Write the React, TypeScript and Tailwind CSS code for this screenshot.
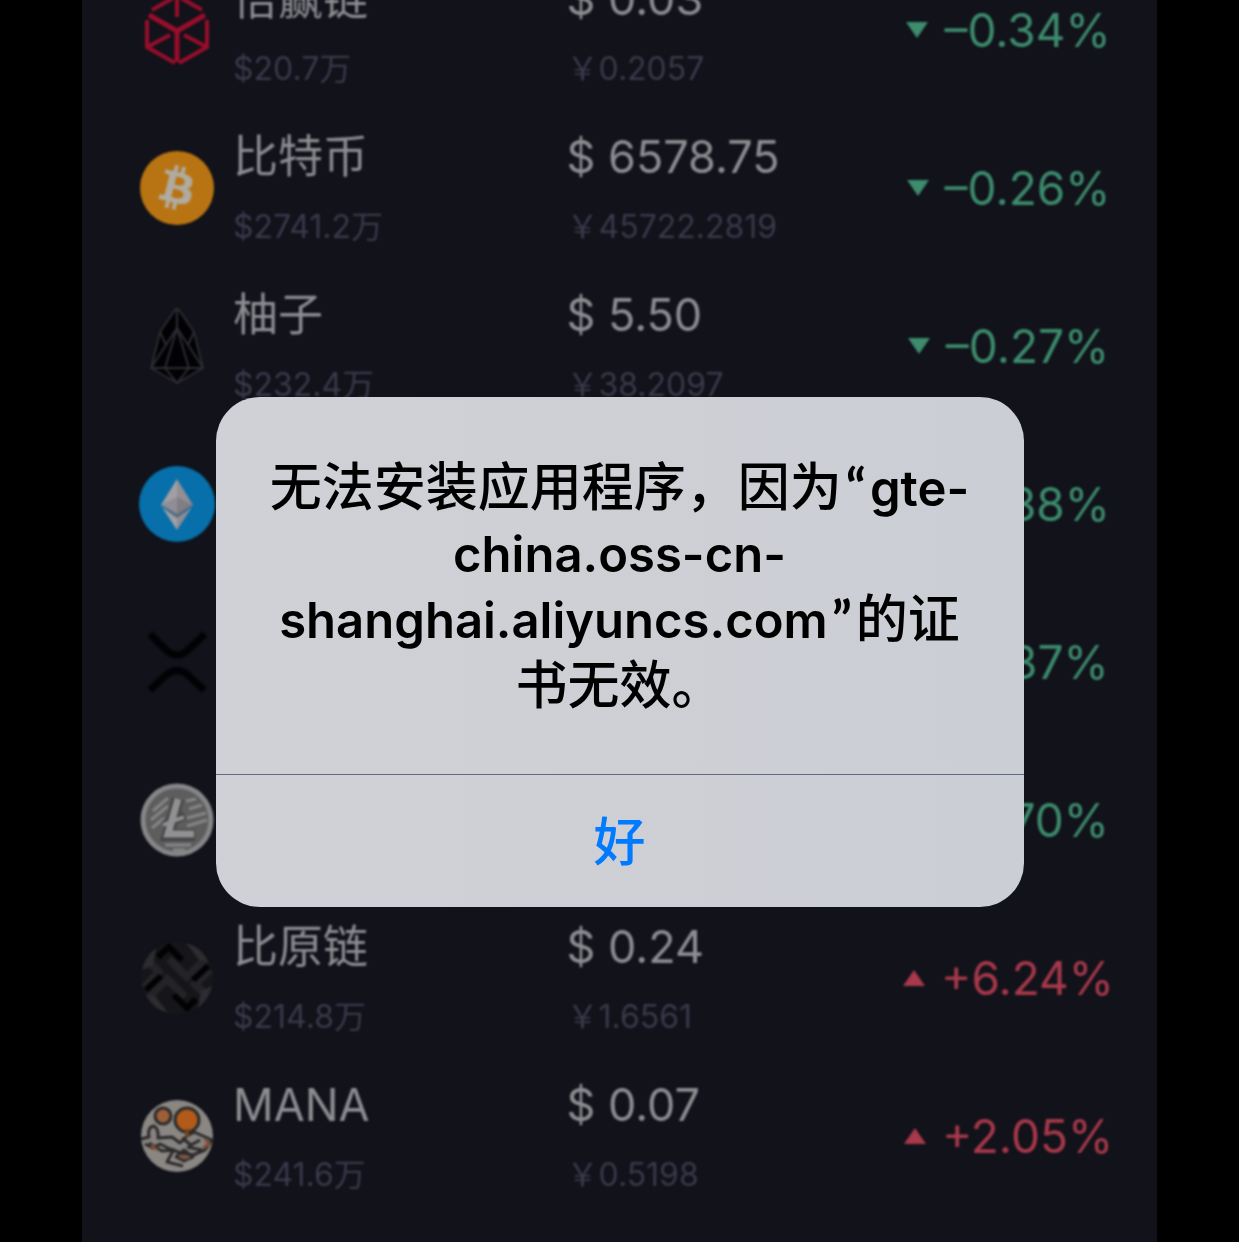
import type { ReactNode } from "react";
import { FaBitcoin } from "react-icons/fa";

type Coin = {
  id: string;
  logo: ReactNode;
  name?: string;
  volume?: string;
  usd?: string;
  cny?: string;
  change: string;
  rising?: boolean;
};

const CubeLogo = () => (
  <svg viewBox="0 0 76 76" className="size-full" fill="none" stroke="#980e2b" strokeWidth="5">
    <path d="M38 4 V25 M13 18 L34 6 M42 6 L63 18" strokeWidth="4" />
    <path d="M10 23 L38 39 L66 23 M38 38 V70" />
    <path d="M8 28 V55 L36 71 M68 28 V55 L40 71" strokeWidth="4" />
    <path d="M10 54 L31 43 M66 54 L45 43" strokeWidth="4" />
  </svg>
);

const BitcoinLogo = () => (
  <span className="m-px flex size-[74px] items-center justify-center rounded-full bg-[radial-gradient(circle,#b0aaa0_0_50%,#b87412_60%)]">
    <FaBitcoin className="size-[74px] text-[#b87412]" />
  </span>
);

const EosLogo = () => (
  <svg viewBox="0 0 76 76" className="size-full" fill="#020204" stroke="#2c2c33" strokeWidth="2" strokeLinejoin="round">
    <path d="M38 -1 L21 24 L12 60 L38 75 L64 60 L55 24 Z" />
    <path d="M38 20 L12 60 H64 Z" />
    <path d="M38 20 L26 60 L38 75 L50 60 Z M38 -1 V20 M21 24 L27 37 M55 24 L49 37" fill="none" />
  </svg>
);

const EthereumLogo = () => (
  <svg viewBox="0 0 76 76" className="size-full">
    <circle cx="38" cy="38" r="38" fill="#076fa9" />
    <path d="M38 13 L22 39 L38 48 Z" fill="#a19fa5" />
    <path d="M38 13 L54 39 L38 48 Z" fill="#928f95" />
    <path d="M22 39 L38 31 V48 Z" fill="#908e94" />
    <path d="M54 39 L38 31 V48 Z" fill="#807d84" />
    <path d="M23 39 L38 48 L53 39 L38 52 Z" fill="#5f6a7a" />
    <path d="M23 41 L38 52 V64 Z" fill="#a19fa5" />
    <path d="M53 41 L38 52 V64 Z" fill="#8f8d93" />
  </svg>
);

const XrpLogo = () => (
  <svg viewBox="0 0 76 76" className="size-full" fill="none" stroke="#020205" strokeWidth="7">
    <path d="M11 10 L26 25 Q38 37 50 25 L66 10" />
    <path d="M11 66 L26 52 Q38 41 50 52 L65 66" />
  </svg>
);

const LitecoinLogo = () => (
  <svg viewBox="0 0 76 76" className="size-full" fill="none">
    <circle cx="38" cy="38" r="34" fill="#5d5d5e" stroke="#868688" strokeWidth="5" />
    <g stroke="#858586" strokeWidth="3">
      <path d="M14 29 L29 16 M12 38 L29 24 M13 46 L25 36 M47 19 L57 17 M50 27 L63 23 M48 36 L67 31 M48 44 L68 38 M26 63 H52 M34 68 H46" />
    </g>
    <path d="M39 17 L29 53 H56" stroke="#454547" strokeWidth="12" />
    <path d="M24 43 L46 34" stroke="#454547" strokeWidth="8" />
    <path d="M39 17 L29 52 H55" stroke="#919193" strokeWidth="7" />
    <path d="M24 43 L45 35" stroke="#919193" strokeWidth="4" />
  </svg>
);

const BytomLogo = () => (
  <svg viewBox="0 0 76 76" className="size-full" fill="none">
    <circle cx="38" cy="38" r="37" fill="#15151a" />
    <g stroke="#242428" strokeWidth="8">
      <path d="M12 24 L20 32 L5 48 M30 19 L48 37 L67 19" />
      <path d="M64 52 L56 44 L71 30 M46 57 L28 39 L10 57" />
    </g>
    <g stroke="#020203" strokeWidth="6">
      <path d="M19 17 L30 7 L43 20" />
      <path d="M57 59 L48 68 L35 55" />
      <path d="M69 26 L54 40 M7 50 L22 36" />
    </g>
    <g fill="#2c2c31">
      <path d="M47 3 Q62 7 69 21 L60 20 Z" />
      <path d="M29 73 Q14 69 7 55 L16 56 Z" />
      <path d="M3 30 Q6 17 17 8 L14 25 Z" />
      <path d="M73 46 Q70 59 59 68 L62 51 Z" />
    </g>
  </svg>
);

const ManaLogo = () => (
  <svg viewBox="0 0 76 76" className="size-full" stroke="#2b2a2b" strokeWidth="3" strokeLinejoin="round">
    <circle cx="38" cy="38" r="36" fill="#8a8783" stroke="none" />
    <circle cx="24" cy="18" r="8" fill="#9c5f38" />
    <circle cx="48" cy="22" r="12" fill="#b25a1a" />
    <path d="M2 41 L10 39 Q8 29 15 28 Q20 31 19 40 L33 39 L41 45 L48 38 L55 34 L73 42 L66 52 L54 57 L42 55 L31 51 L21 46 L14 50 L6 46" fill="#85827f" />
    <path d="M43 40 L52 47 L61 42 M48 49 L63 52 M10 45 L23 53 L36 52 M34 53 L28 64 L44 68 M37 59 L45 52 L54 59 L45 63 Z" fill="none" />
    <path d="M66 41 L70 46 L64 50 M12 47 L18 52 M40 58 L50 60" stroke="#884d36" fill="none" />
    <path d="M48 31 V39" stroke="#74401f" strokeWidth="4" />
  </svg>
);

const coins: Coin[] = [
  { id: "cube", logo: <CubeLogo />, name: "倍赢链", volume: "$20.7万", usd: "$ 0.03", cny: "￥0.2057", change: "–0.34%" },
  { id: "btc", logo: <BitcoinLogo />, name: "比特币", volume: "$2741.2万", usd: "$ 6578.75", cny: "￥45722.2819", change: "–0.26%" },
  { id: "eos", logo: <EosLogo />, name: "柚子", volume: "$232.4万", usd: "$ 5.50", cny: "￥38.2097", change: "–0.27%" },
  { id: "eth", logo: <EthereumLogo />, change: "–0.38%" },
  { id: "xrp", logo: <XrpLogo />, change: "–0.37%" },
  { id: "ltc", logo: <LitecoinLogo />, change: "–0.70%" },
  { id: "btm", logo: <BytomLogo />, name: "比原链", volume: "$214.8万", usd: "$ 0.24", cny: "￥1.6561", change: "+6.24%", rising: true },
  { id: "mana", logo: <ManaLogo />, name: "MANA", volume: "$241.6万", usd: "$ 0.07", cny: "￥0.5198", change: "+2.05%", rising: true },
];

function Figures({ main, sub }: { main?: string; sub?: string }) {
  return (
    <div className="flex flex-col gap-[22px] whitespace-nowrap">
      <span className="h-14 text-[45px] leading-14 text-[#8d8d91]">{main}</span>
      <span className="h-10 text-[32px] leading-10 text-[#3b394b]">{sub}</span>
    </div>
  );
}

function CoinRow({ coin }: { coin: Coin }) {
  return (
    <li className="grid h-[158px] grid-cols-[76px_1fr_1fr_217px] items-center gap-x-[18px] pr-10 pl-[57px]">
      <div className="size-[76px]">{coin.logo}</div>
      <Figures main={coin.name} sub={coin.volume} />
      <Figures main={coin.usd} sub={coin.cny} />
      <div
        className={
          coin.rising
            ? "flex items-center justify-center gap-4 text-[46px] whitespace-nowrap text-[#a8394a]"
            : "flex items-center justify-center gap-4 text-[46px] whitespace-nowrap text-[#3d8c6d]"
        }
      >
        <svg viewBox="0 0 22 16" className="h-4 w-[22px] shrink-0" fill="currentColor">
          <path d={coin.rising ? "M11 0 L22 16 H0 Z" : "M0 0 H22 L11 16 Z"} />
        </svg>
        <span>{coin.change}</span>
      </div>
    </li>
  );
}

function Latin({ children }: { children: ReactNode }) {
  return <span className="text-[49px] leading-none font-semibold">{children}</span>;
}

function Quote({ children }: { children: ReactNode }) {
  return <span className="px-1 font-['Lato',sans-serif] leading-none font-bold">{children}</span>;
}

export default function App() {
  return (
    <div className="relative h-screen overflow-hidden bg-black px-[82px] font-['Inter','Noto_Sans_CJK_SC',sans-serif]" lang="zh-CN">
      <main className="h-full overflow-hidden bg-[#11121a]">
        <ul className="-mt-[49px] blur-[1px]">
          {coins.map((coin) => (
            <CoinRow key={coin.id} coin={coin} />
          ))}
        </ul>
      </main>

      <div className="absolute inset-0 flex items-center justify-center pt-[62px]">
        <section
          role="alertdialog"
          aria-modal="true"
          aria-labelledby="alert-message"
          className="w-[808px] max-w-full overflow-hidden rounded-[44px] bg-linear-to-r from-[#d0d1d7] to-[#cbced4]"
        >
          <h1 id="alert-message" className="px-10 pt-[58px] pb-[55px] text-center text-[52px] leading-[66px] font-medium whitespace-nowrap text-black">
            无法安装应用程序，因为<Quote>“</Quote>
            <Latin>gte-</Latin>
            <br />
            <Latin>china.oss-cn-</Latin>
            <br />
            <Latin>shanghai.aliyuncs.com</Latin>
            <Quote>”</Quote>的证
            <br />
            书无效。
          </h1>
          <button type="button" className="block h-[133px] w-full border-t border-[#626783] pt-1 text-[52px] font-medium text-[#007aff]">
            好
          </button>
        </section>
      </div>
    </div>
  );
}
